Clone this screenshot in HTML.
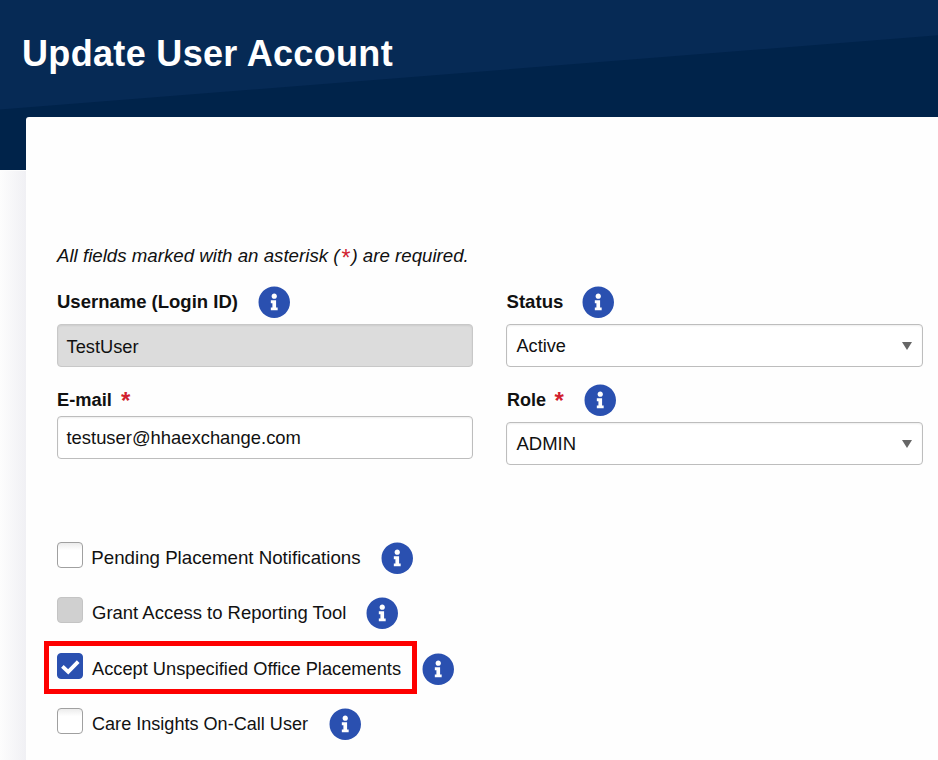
<!DOCTYPE html>
<html>
<head>
<meta charset="utf-8">
<style>
html,body{margin:0;padding:0;}
body{width:938px;height:760px;overflow:hidden;position:relative;background:#fdfdfd;font-family:"Liberation Sans",sans-serif;color:#111;}
.hdr{position:absolute;left:0;top:0;width:938px;height:170px;background:#00234a;overflow:hidden;}
.hdr svg{position:absolute;left:0;top:0;}
.shadow{position:absolute;left:0;top:171px;width:26px;height:589px;background:linear-gradient(to right,#fdfdfd,#f0f0f4);}
.card{position:absolute;left:26px;top:117px;width:920px;height:700px;background:#fefefe;border-radius:3px 0 0 0;}
.t{position:absolute;white-space:nowrap;}
.title{position:absolute;font-weight:bold;color:#fff;white-space:nowrap;}
.req{color:#d11f2f;}
.inp{position:absolute;box-sizing:border-box;border:1px solid #bdbdbd;border-radius:4px;background:#fff;box-shadow:inset 0 1px 2px rgba(0,0,0,0.07);}
.dis{background:#dcdcdc;border-color:#c8c8c8;}
.tri{position:absolute;width:0;height:0;border-left:5px solid transparent;border-right:5px solid transparent;border-top:8px solid #666;}
.ic{position:absolute;}
.cb{position:absolute;box-sizing:border-box;width:26px;height:26px;border:1px solid #a0a0a0;border-radius:4px;background:linear-gradient(#ececec,#fff 30%);}
.cb.g{background:#d0d0d0;border-color:#c4c4c4;}
.cb.on{background:#2a50b0;border-color:#2a50b0;}
.red{position:absolute;left:44px;top:641px;width:373px;height:53px;box-sizing:border-box;border:5px solid #fe0000;}
</style>
</head>
<body>
<div class="hdr"><svg width="938" height="170" viewBox="0 0 938 170"><polygon points="0,0 938,0 938,35.3 0,109.5" fill="#062a55"/></svg><div class="title" style="left:22px;top:36px;font-size:36px;line-height:36px;letter-spacing:0.33px">Update User Account</div></div>
<div class="shadow"></div><div class="card"></div>
<div class="t" style="left:57px;top:246.5px;font-size:18.7px;line-height:18.7px;font-style:italic;">All fields marked with an asterisk (<span class="req" style="font-size:23px;line-height:0;position:relative;top:4px;font-style:normal;margin:0 1px 0 2px">*</span>) are required.</div>
<div class="t" style="left:57px;top:293px;font-size:18.5px;line-height:18.5px;font-weight:bold;">Username (Login ID)</div>
<svg class="ic" style="left:257.95px;top:285.75px;width:32.5px;height:32.5px" viewBox="0 0 512 512"><path fill-rule="evenodd" fill="#2a50b0" d="M256 8C119.043 8 8 119.083 8 256c0 136.997 111.043 248 248 248s248-111.003 248-248C504 119.083 392.957 8 256 8zm0 110c23.196 0 42 18.804 42 42s-18.804 42-42 42-42-18.804-42-42 18.804-42 42-42zM310 383H202V337H227V270H202V225H285V337H310Z"/></svg>
<div class="inp dis" style="left:57px;top:324px;width:416px;height:43px;"></div>
<div class="t" style="left:66.5px;top:338px;font-size:18.25px;line-height:18.25px;">TestUser</div>
<div class="t" style="left:506.5px;top:293px;font-size:18.6px;line-height:18.6px;font-weight:bold;">Status</div>
<svg class="ic" style="left:581.95px;top:285.75px;width:32.5px;height:32.5px" viewBox="0 0 512 512"><path fill-rule="evenodd" fill="#2a50b0" d="M256 8C119.043 8 8 119.083 8 256c0 136.997 111.043 248 248 248s248-111.003 248-248C504 119.083 392.957 8 256 8zm0 110c23.196 0 42 18.804 42 42s-18.804 42-42 42-42-18.804-42-42 18.804-42 42-42zM310 383H202V337H227V270H202V225H285V337H310Z"/></svg>
<div class="inp" style="left:506px;top:324px;width:417px;height:43px;"></div>
<div class="t" style="left:516.5px;top:337px;font-size:18.15px;line-height:18.15px;">Active</div>
<div class="tri" style="left:902px;top:342px;"></div>
<div class="t" style="left:57px;top:391px;font-size:18.3px;line-height:18.3px;font-weight:bold;">E-mail</div>
<div class="t" style="left:121px;top:389px;font-size:24px;line-height:24px;font-weight:bold;"><span class="req">*</span></div>
<div class="inp" style="left:57px;top:416px;width:416px;height:43px;"></div>
<div class="t" style="left:66.5px;top:429px;font-size:18.4px;line-height:18.4px;">testuser@hhaexchange.com</div>
<div class="t" style="left:507px;top:391px;font-size:18px;line-height:18px;font-weight:bold;">Role</div>
<div class="t" style="left:554.5px;top:389px;font-size:24px;line-height:24px;font-weight:bold;"><span class="req">*</span></div>
<svg class="ic" style="left:583.85px;top:383.85px;width:32.5px;height:32.5px" viewBox="0 0 512 512"><path fill-rule="evenodd" fill="#2a50b0" d="M256 8C119.043 8 8 119.083 8 256c0 136.997 111.043 248 248 248s248-111.003 248-248C504 119.083 392.957 8 256 8zm0 110c23.196 0 42 18.804 42 42s-18.804 42-42 42-42-18.804-42-42 18.804-42 42-42zM310 383H202V337H227V270H202V225H285V337H310Z"/></svg>
<div class="inp" style="left:506px;top:422px;width:417px;height:43px;"></div>
<div class="t" style="left:516.5px;top:435px;font-size:18.5px;line-height:18.5px;">ADMIN</div>
<div class="tri" style="left:902px;top:440px;"></div>
<div class="cb " style="left:57px;top:542px;"></div>
<div class="t" style="left:91.3px;top:549px;font-size:18.72px;line-height:18.72px;">Pending Placement Notifications</div>
<svg class="ic" style="left:380.85px;top:541.85px;width:32.5px;height:32.5px" viewBox="0 0 512 512"><path fill-rule="evenodd" fill="#2a50b0" d="M256 8C119.043 8 8 119.083 8 256c0 136.997 111.043 248 248 248s248-111.003 248-248C504 119.083 392.957 8 256 8zm0 110c23.196 0 42 18.804 42 42s-18.804 42-42 42-42-18.804-42-42 18.804-42 42-42zM310 383H202V337H227V270H202V225H285V337H310Z"/></svg>
<div class="cb g" style="left:57px;top:597px;"></div>
<div class="t" style="left:92px;top:604px;font-size:18.49px;line-height:18.49px;">Grant Access to Reporting Tool</div>
<svg class="ic" style="left:365.75px;top:596.75px;width:32.5px;height:32.5px" viewBox="0 0 512 512"><path fill-rule="evenodd" fill="#2a50b0" d="M256 8C119.043 8 8 119.083 8 256c0 136.997 111.043 248 248 248s248-111.003 248-248C504 119.083 392.957 8 256 8zm0 110c23.196 0 42 18.804 42 42s-18.804 42-42 42-42-18.804-42-42 18.804-42 42-42zM310 383H202V337H227V270H202V225H285V337H310Z"/></svg>
<div class="cb on" style="left:57px;top:653px;"><svg width="24" height="24" viewBox="0 0 24 24" style="position:absolute;left:0;top:0"><polyline points="4.4,12.4 10.2,17.8 20.2,7.6" fill="none" stroke="#fff" stroke-width="3.8" stroke-linecap="butt" stroke-linejoin="miter"/></svg></div>
<div class="t" style="left:92px;top:660px;font-size:18.25px;line-height:18.25px;">Accept Unspecified Office Placements</div>
<svg class="ic" style="left:422.05px;top:652.95px;width:32.5px;height:32.5px" viewBox="0 0 512 512"><path fill-rule="evenodd" fill="#2a50b0" d="M256 8C119.043 8 8 119.083 8 256c0 136.997 111.043 248 248 248s248-111.003 248-248C504 119.083 392.957 8 256 8zm0 110c23.196 0 42 18.804 42 42s-18.804 42-42 42-42-18.804-42-42 18.804-42 42-42zM310 383H202V337H227V270H202V225H285V337H310Z"/></svg>
<div class="red"></div>
<div class="cb " style="left:57px;top:708px;"></div>
<div class="t" style="left:92px;top:715px;font-size:18.08px;line-height:18.08px;">Care Insights On-Call User</div>
<svg class="ic" style="left:329.05px;top:707.75px;width:32.5px;height:32.5px" viewBox="0 0 512 512"><path fill-rule="evenodd" fill="#2a50b0" d="M256 8C119.043 8 8 119.083 8 256c0 136.997 111.043 248 248 248s248-111.003 248-248C504 119.083 392.957 8 256 8zm0 110c23.196 0 42 18.804 42 42s-18.804 42-42 42-42-18.804-42-42 18.804-42 42-42zM310 383H202V337H227V270H202V225H285V337H310Z"/></svg>
</body>
</html>
